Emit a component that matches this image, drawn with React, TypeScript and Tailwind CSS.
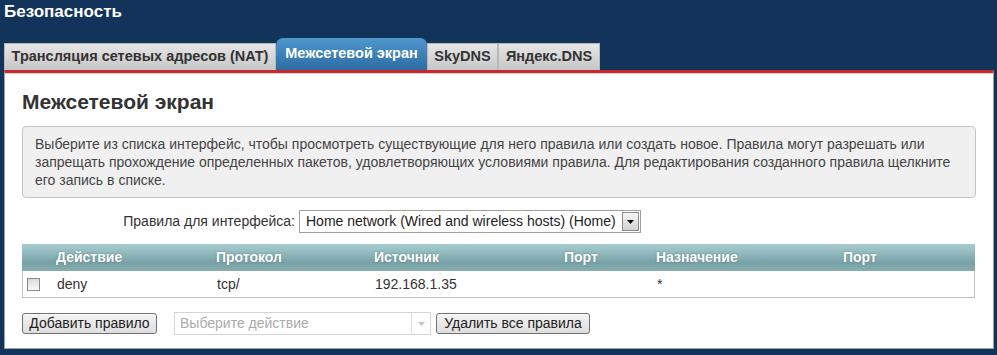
import React from "react";

const font = { fontFamily: '"Liberation Sans", Arial, sans-serif' };

function Tab({ label, w, active }: { label: string; w: string; active?: boolean }) {
  if (active) {
    return (
      <div
        className={`${w} h-[32px] flex items-center justify-center rounded-t-[7px] text-[14.5px] font-bold text-white bg-[linear-gradient(#4f97cc,#2c6ca3)]`}
      >
        {label}
      </div>
    );
  }
  return (
    <div
      className={`${w} h-[27px] flex items-center justify-center text-[14.5px] font-bold text-[#333] border border-b-0 border-[#b8b8b8] bg-[linear-gradient(#e6e6e6,#c6c6c6)]`}
    >
      {label}
    </div>
  );
}

function Button({ children, w }: { children: React.ReactNode; w: string }) {
  return (
    <div
      className={`${w} h-[21px] flex items-center justify-center rounded-[3px] border border-[#707070] bg-[linear-gradient(#f4f4f4,#dedede)] text-[14px] text-[#222] shadow-[inset_0_1px_0_#fff]`}
    >
      {children}
    </div>
  );
}

export default function App() {
  const cols = "grid grid-cols-[34px_160px_158px_190px_92px_187px_1fr] items-center";
  return (
    <div className="w-[997px] h-[355px] bg-[#12345b] overflow-hidden" style={font}>
      <div className="h-[24px] pl-[4px] text-[17px] leading-[24px] font-bold text-white">Безопасность</div>
      <div className="mt-[14px] flex items-end px-[4px] h-[32px]">
        <Tab label="Трансляция сетевых адресов (NAT)" w="w-[272px]" />
        <Tab label="Межсетевой экран" w="w-[151px]" active />
        <Tab label="SkyDNS" w="w-[71px]" />
        <Tab label="Яндекс.DNS" w="w-[102px]" />
      </div>
      <div className="ml-[4px] w-[990px] h-[279px] bg-white border-t-[3px] border-t-[#c9292c] border-x border-b border-x-[#9aa3ad] border-b-[#9aa3ad]">
        <div className="h-[1px] bg-[#d6d6d6]" />
        <div className="px-[17px] pt-[16px]">
          <div className="text-[21px] leading-[24px] font-bold text-[#333]">Межсетевой экран</div>
          <div className="mt-[12px] h-[72px] w-[954px] rounded-[4px] border border-[#c4c4c4] bg-[#f0f0f0] px-[12px] pt-[8px] text-[14px] leading-[18px] text-[#444]">
            Выберите из списка интерфейс, чтобы просмотреть существующие для него правила или создать новое. Правила могут разрешать или запрещать прохождение определенных пакетов, удовлетворяющих условиями правила. Для редактирования созданного правила щелкните его запись в списке.
          </div>
          <div className="mt-[12px] flex items-center h-[23px]">
            <div className="w-[277px] pr-[4px] text-right text-[14px] text-[#333]">Правила для интерфейса:</div>
            <div className="flex items-center h-[23px] w-[342px] border border-[#a0a0a0] bg-white">
              <div className="flex-1 pl-[6px] text-[14px] leading-[21px] text-[#222] whitespace-nowrap overflow-hidden">
                Home network (Wired and wireless hosts) (Home)
              </div>
              <div className="mr-px w-[17px] h-[19px] border border-[#8a8a8a] bg-[linear-gradient(#f6f6f6,#d2d2d2)] flex items-center justify-center">
                <svg width="7" height="4" viewBox="0 0 7 4"><path d="M0 0h7L3.5 4z" fill="#111" /></svg>
              </div>
            </div>
          </div>
          <div className="mt-[11px] w-[953px] border border-[#c0c0c0]">
            <div className={`${cols} h-[27px] -m-px mb-0 bg-[linear-gradient(#a8cdd1_0%,#89b2b6_45%,#78a1a5_70%,#86aeb2_100%)] text-[14px] font-bold text-white [text-shadow:0_0_2px_rgba(60,90,95,0.6)]`}>
              <div />
              <div>Действие</div>
              <div>Протокол</div>
              <div>Источник</div>
              <div>Порт</div>
              <div>Назначение</div>
              <div>Порт</div>
            </div>
            <div className={`${cols} h-[26px] text-[14px] text-[#333]`}>
              <div className="pl-[4px]">
                <div className="w-[13px] h-[13px] border border-[#8a8a8a] bg-[linear-gradient(#dcdcdc,#f8f8f8)]" />
              </div>
              <div>deny</div>
              <div>tcp/</div>
              <div>192.168.1.35</div>
              <div />
              <div>*</div>
              <div />
            </div>
          </div>
          <div className="mt-[14px] flex items-center">
            <Button w="w-[135px]">Добавить правило</Button>
            <div className="ml-[17px] flex h-[23px] w-[257px] border border-[#d4d4d4] bg-white">
              <div className="flex-1 pl-[5px] text-[14px] leading-[21px] text-[#ababab]">Выберите действие</div>
              <div className="w-[19px] border-l border-[#dedede] flex items-center justify-center">
                <svg width="7" height="4" viewBox="0 0 7 4"><path d="M0 0h7L3.5 4z" fill="#c4c4c4" /></svg>
              </div>
            </div>
            <div className="ml-[5px]">
              <Button w="w-[154px]">Удалить все правила</Button>
            </div>
          </div>
        </div>
      </div>
    </div>
  );
}
